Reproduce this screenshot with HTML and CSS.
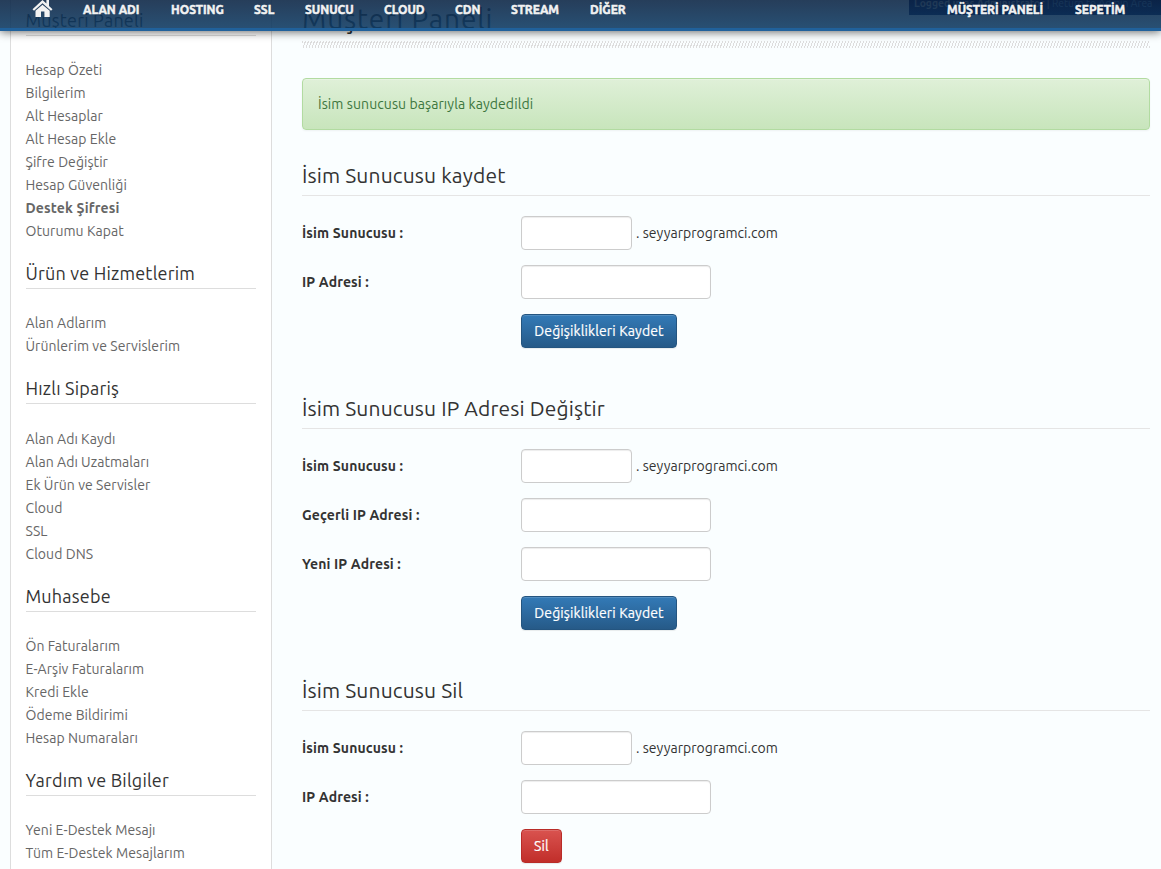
FILE: index.html
```html
<!DOCTYPE html>
<html lang="tr">
<head>
<meta charset="utf-8">
<title>Müşteri Paneli</title>
<link rel="stylesheet" href="styles.css">
</head>
<body>
<div class="admin-bar"><b>Logged in as Administrator</b> | <span>Return to Admin Area</span></div>
<header class="navbar">
  <svg class="home" viewBox="0 0 22 18" width="22" height="18"><path fill="#f2f2f2" d="M10.5 0 0.5 9.2 2 10.8 10.5 3.3 19 10.8 20.5 9.2 17 6V0H14.4V3.6ZM10.5 4.7 3.5 10.8V17H9V11.5H12.4V17H17.7V10.8Z"/></svg>
  <nav class="nav-left">
    <a class="n1">ALAN ADI</a><a class="n2">HOSTING</a><a class="n3">SSL</a><a class="n4">SUNUCU</a><a class="n5">CLOUD</a><a class="n6">CDN</a><a class="n7">STREAM</a><a class="n8">DİĞER</a>
  </nav>
  <nav class="nav-right"><a class="n9">MÜŞTERİ PANELİ</a><a class="n10">SEPETİM</a></nav>
</header>
<div class="page">
  <aside class="sidebar">
    <h3>Müşteri Paneli</h3>
    <ul><li>Hesap Özeti</li><li>Bilgilerim</li><li>Alt Hesaplar</li><li>Alt Hesap Ekle</li><li>Şifre Değiştir</li><li>Hesap Güvenliği</li><li class="strong">Destek Şifresi</li><li>Oturumu Kapat</li></ul>
    <h3>Ürün ve Hizmetlerim</h3>
    <ul><li>Alan Adlarım</li><li>Ürünlerim ve Servislerim</li></ul>
    <h3>Hızlı Sipariş</h3>
    <ul class="quick"><li>Alan Adı Kaydı</li><li>Alan Adı Uzatmaları</li><li>Ek Ürün ve Servisler</li><li>Cloud</li><li>SSL</li><li>Cloud DNS</li></ul>
    <h3>Muhasebe</h3>
    <ul><li>Ön Faturalarım</li><li>E-Arşiv Faturalarım</li><li>Kredi Ekle</li><li>Ödeme Bildirimi</li><li>Hesap Numaraları</li></ul>
    <h3>Yardım ve Bilgiler</h3>
    <ul><li>Yeni E-Destek Mesajı</li><li>Tüm E-Destek Mesajlarım</li></ul>
  </aside>
  <main class="content">
    <h1>Müşteri Paneli</h1>
    <div class="stripes"></div>
    <div class="alert">İsim sunucusu başarıyla kaydedildi</div>
    <section>
      <h2>İsim Sunucusu kaydet</h2>
      <div class="row"><label>İsim Sunucusu :</label><input class="short"><span class="domain">. seyyarprogramci.com</span></div>
      <div class="row"><label>IP Adresi :</label><input></div>
      <div class="row"><label></label><button>Değişiklikleri Kaydet</button></div>
    </section>
    <section>
      <h2>İsim Sunucusu IP Adresi Değiştir</h2>
      <div class="row"><label>İsim Sunucusu :</label><input class="short"><span class="domain">. seyyarprogramci.com</span></div>
      <div class="row"><label>Geçerli IP Adresi :</label><input></div>
      <div class="row"><label>Yeni IP Adresi :</label><input></div>
      <div class="row"><label></label><button>Değişiklikleri Kaydet</button></div>
    </section>
    <section>
      <h2>İsim Sunucusu Sil</h2>
      <div class="row"><label>İsim Sunucusu :</label><input class="short"><span class="domain">. seyyarprogramci.com</span></div>
      <div class="row"><label>IP Adresi :</label><input></div>
      <div class="row"><label></label><button class="danger">Sil</button></div>
    </section>
  </main>
</div>
</body>
</html>
```
FILE: styles.css
```css
* { box-sizing: border-box; }
body { margin: 0; height: 869px; overflow: hidden; background: #fafeff; color: #333; font: 14px/20px Ubuntu, "Noto Sans", sans-serif; }
h1, h2, h3, ul { margin: 0; padding: 0; font-weight: 400; list-style: none; white-space: nowrap; }

.navbar { position: absolute; z-index: 3; top: 0; left: 0; width: 100%; height: 31px; display: flex; align-items: flex-start; border-bottom: 3px solid #20619b; background: linear-gradient(rgba(12,38,70,.89), rgba(14,58,98,.89)); background-clip: padding-box; box-shadow: 0 1px 10px rgba(0,0,0,.6); color: #f2f2f2; font-size: 12px; font-weight: 700; -webkit-text-stroke: .5px #f2f2f2; }
.home { margin-left: 32px; flex: none; }
.nav-left { display: flex; gap: 30px; margin-left: 29px; }
.nav-right { display: flex; gap: 30px; margin: 0 34px 0 auto; }
.navbar a { white-space: nowrap; }
.n1 { width: 58px; } .n2 { width: 53px; } .n3 { width: 21px; } .n4 { width: 49px; } .n5 { width: 41px; }
.n6 { width: 26px; } .n7 { width: 49px; } .n8 { width: 37px; } .n9 { width: 98px; } .n10 { width: 52px; }
.admin-bar { position: absolute; z-index: 2; top: 0; right: 0; width: 252px; height: 15px; padding-left: 5px; overflow: hidden; background: #000b50; color: #bbb; font-size: 10.3px; line-height: 6px; white-space: nowrap; }
.admin-bar span { color: #6699cc; }

.page { display: flex; padding-left: 10px; }
.sidebar { width: 262px; height: 869px; flex: none; overflow: hidden; padding: 5px 15px 0 14.5px; border: solid #ddd; border-width: 0 1px; background: #fff; }
.sidebar h3 { height: 31px; margin-bottom: 23px; padding-top: 1px; border-bottom: 1px solid #ddd; font-size: 18px; line-height: 28px; letter-spacing: .2px; }
.sidebar ul { margin-bottom: 15px; color: #666; line-height: 23px; letter-spacing: .06px; }
.sidebar .quick { margin-top: 24px; }
.sidebar li { height: 23px; white-space: nowrap; }
.strong { font-weight: 700; letter-spacing: .16px; }

.content { width: 848px; margin-left: 30px; }
h1 { height: 41px; font-size: 28px; line-height: 37px; letter-spacing: .85px; }
.stripes { height: 7px; background: repeating-linear-gradient(110deg, #ddd 0 1px, transparent 1px 2.82px); }
.alert { height: 52px; margin: 30px 0 32px; padding: 15px; border: 1px solid #b2dba1; border-radius: 4px; background: linear-gradient(#dff0d8, #c8e5bc); box-shadow: inset 0 1px 0 rgba(255,255,255,.25), 0 1px 2px rgba(0,0,0,.05); color: #3c763d; letter-spacing: .09px; }
section { margin-bottom: 47px; }
h2 { height: 34px; margin-bottom: 20px; border-bottom: 1px solid #e5e5e5; font-size: 21px; line-height: 27px; letter-spacing: .14px; }
.row { display: flex; align-items: center; height: 34px; margin-bottom: 15px; }
label { width: 219px; font-weight: 700; letter-spacing: .13px; white-space: nowrap; }
input { width: 190px; height: 34px; border: 1px solid #ccc; border-radius: 4px; background: #fff; box-shadow: inset 0 1px 1px rgba(0,0,0,.075); }
.short { width: 111px; }
.domain { margin-left: 4px; letter-spacing: .04px; }
button { width: 156px; height: 34px; padding: 0; border: 1px solid #245580; border-radius: 4px; background: linear-gradient(#337ab7, #265a88); box-shadow: inset 0 1px 0 rgba(255,255,255,.15), 0 1px 1px rgba(0,0,0,.075); color: #fff; font: inherit; letter-spacing: .12px; white-space: nowrap; -webkit-text-stroke: .2px #fff; }
.danger { width: 41px; border-color: #b92c28; background: linear-gradient(#d9534f, #c12e2a); }
```
